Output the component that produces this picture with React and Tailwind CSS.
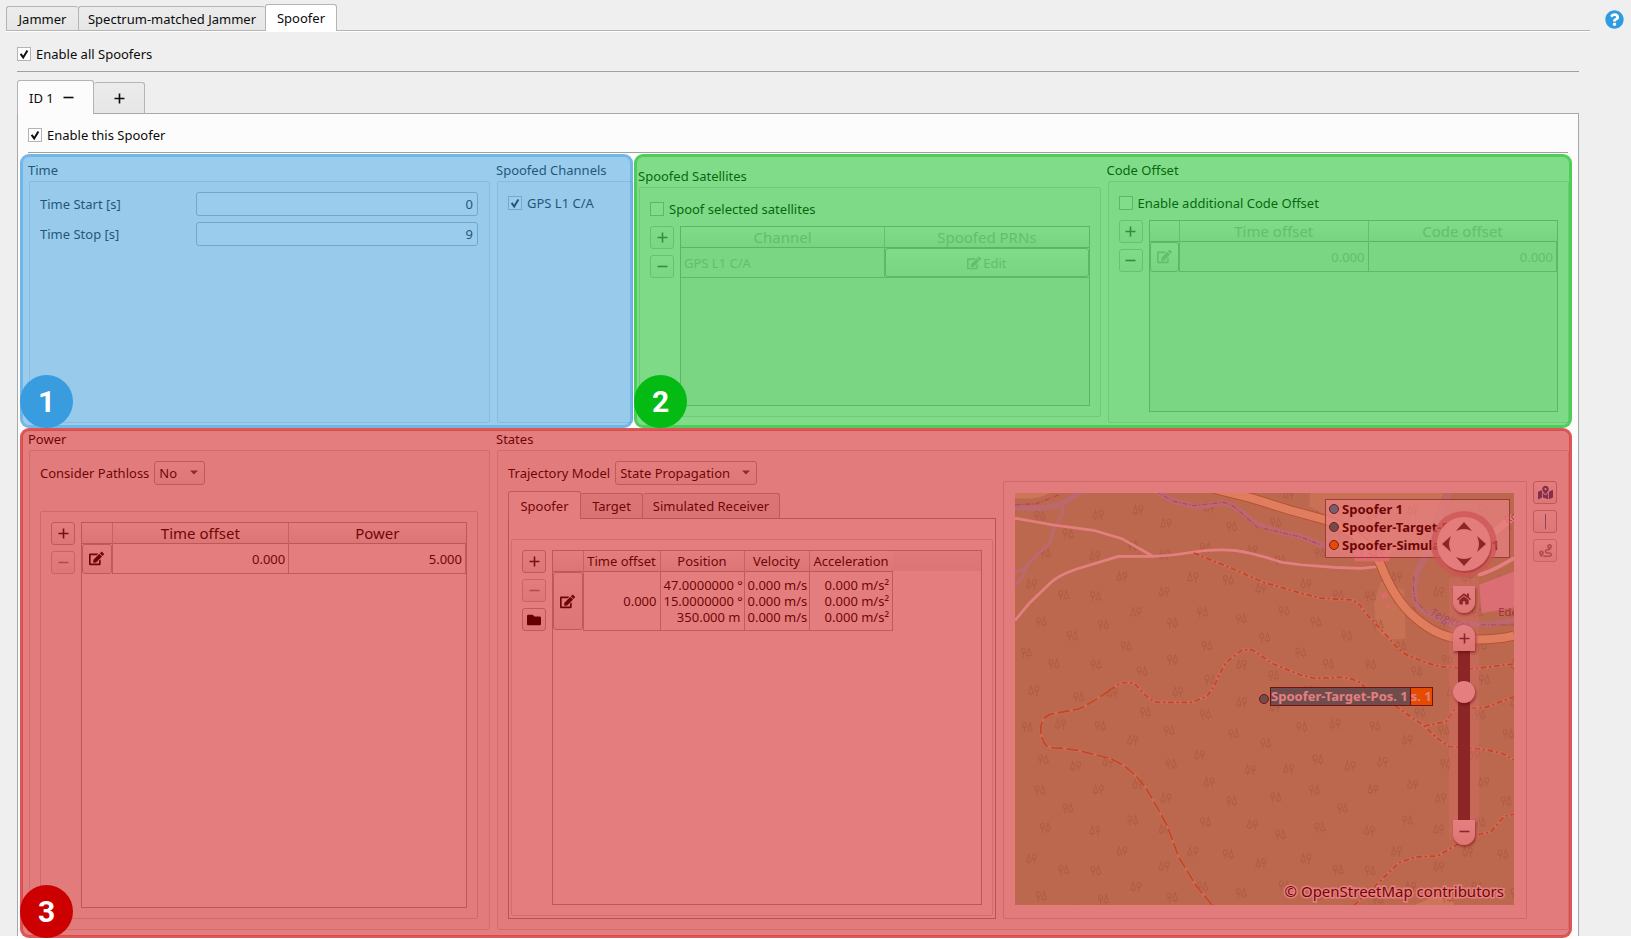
import React from 'react';
import { FaEdit, FaFolder, FaHome, FaMapMarkedAlt, FaQuestionCircle, FaRoute } from 'react-icons/fa';
import clsx from 'clsx';

const bevel = 'border border-[#b4b4b4] rounded-[3px] bg-linear-to-b from-[#fcfcfc] to-[#efefef]';

function Check({ id, label, defaultChecked }) {
  return (
    <div className="flex items-center gap-[5px] h-5">
      <span className="relative size-[14px] shrink-0">
        <input
          id={id}
          type="checkbox"
          defaultChecked={defaultChecked}
          className="peer block size-[14px] appearance-none border border-[#b4b4b4] bg-white"
        />
        <svg viewBox="0 0 14 14" className="absolute inset-0 hidden peer-checked:block pointer-events-none">
          <path d="M3.6 6.8 L6.2 10.4 L10.4 3.4" fill="none" stroke="#111" strokeWidth="2" />
        </svg>
      </span>
      <label htmlFor={id}>{label}</label>
    </div>
  );
}

function Group({ title, className, children }) {
  return (
    <section className={clsx('flex flex-col min-w-0', className)}>
      {title && <h3 className="h-5 leading-5">{title}</h3>}
      <div className="flex-1 flex flex-col ml-px mt-px border border-[#dadada] rounded-[2px] bg-[#f8f8f8] p-[10px]">
        {children}
      </div>
    </section>
  );
}

function Tool({ label, disabled, children }) {
  return (
    <button
      type="button"
      aria-label={label}
      disabled={disabled}
      className={clsx(bevel, 'w-6 h-[23px] flex items-center justify-center text-[#222] disabled:text-[#999] disabled:border-[#c8c8c8]')}
    >
      {children}
    </button>
  );
}

function Plus() {
  return (
    <svg width="11" height="11" viewBox="0 0 11 11" fill="none" stroke="currentColor" strokeWidth="1.6">
      <path d="M5.5 0.5 V10.5 M0.5 5.5 H10.5" />
    </svg>
  );
}

function Minus() {
  return (
    <svg width="11" height="11" viewBox="0 0 11 11" fill="none" stroke="currentColor" strokeWidth="1.6">
      <path d="M0.5 5.5 H10.5" />
    </svg>
  );
}

function Tools({ locked, muted, folder }) {
  return (
    <div className={clsx('flex flex-col gap-[6px]', muted && 'opacity-70')}>
      <Tool label="Add row"><Plus /></Tool>
      <Tool label="Remove row" disabled={locked}><Minus /></Tool>
      {folder && <Tool label="Open file"><FaFolder size={14} className="text-black" /></Tool>}
    </div>
  );
}

function EditCell({ disabled }) {
  return (
    <td className="w-[30px] h-[30px] p-0">
      <button
        type="button"
        aria-label="Edit row"
        disabled={disabled}
        className={clsx(bevel, 'size-full min-h-[29px] flex items-center justify-center')}
      >
        <FaEdit size={15} />
      </button>
    </td>
  );
}

const head = 'h-5 p-0 font-normal text-center bg-linear-to-b from-[#fcfcfc] to-[#ececec]';
const cell = 'border border-t-0 border-[#b8b8b8] px-[3px] py-0 text-right';

// Two value columns behind an edit button
function OffsetTable({ first, second, a, b, disabled }) {
  return (
    <div className={clsx('flex-1 border border-[#b0b0b0]', disabled ? 'bg-[#f0f0f0] text-[#c2c2c2]' : 'bg-[#fcfcfc]')}>
      <table className="w-full table-fixed border-collapse">
        <thead className="text-[15px] leading-5">
          <tr className="border-b border-[#b0b0b0]">
            <th className={clsx(head, 'w-[30px]')} aria-label="Edit" />
            <th className={clsx(head, 'border-x border-[#c4c4c4]')}>{first}</th>
            <th className={head}>{second}</th>
          </tr>
        </thead>
        <tbody>
          <tr>
            <EditCell disabled={disabled} />
            <td className={cell}>{a}</td>
            <td className={cell}>{b}</td>
          </tr>
        </tbody>
      </table>
    </div>
  );
}

function Dropdown({ id, label, options, className }) {
  return (
    <div className="flex items-center gap-[5px] h-6">
      <label htmlFor={id}>{label}</label>
      <span className="relative">
        <select id={id} className={clsx(bevel, 'block appearance-none h-6 px-1', className)}>
          {options.map((o) => <option key={o}>{o}</option>)}
        </select>
        <svg width="8" height="5" viewBox="0 0 8 5" className="absolute right-[7px] top-[9px] pointer-events-none">
          <path d="M0 0.5 H8 L4 4.5 Z" fill="#555" />
        </svg>
      </span>
    </div>
  );
}

function Badge({ children, className }) {
  return (
    <div className={clsx('absolute z-20 left-0 size-[53px] rounded-full flex items-center justify-center text-white font-bold text-[30px] leading-none font-[Roboto,sans-serif]', className)}>
      {children}
    </div>
  );
}

// Tree symbols as [x, y, mirrored], repeated every 822 units
const TREES = [
  [120, 139, 0], [294, 137, 1], [413, 122, 1], [497, 163, 1], [626, 115, 1], [694, 172, 0], [826, 160, 0],
  [864, 75, 1], [749, 78, 1], [204, 193, 0], [136, 251, 0], [284, 260, 1], [398, 229, 0], [491, 256, 1],
  [616, 235, 0], [755, 242, 1], [840, 272, 0], [94, 344, 1], [191, 377, 0], [287, 380, 0], [365, 322, 1],
  [577, 324, 1], [684, 331, 0], [781, 357, 1], [491, 367, 1], [407, 428, 1], [607, 428, 0], [723, 447, 0],
  [851, 424, 0], [124, 457, 0], [310, 466, 0], [517, 460, 0], [217, 499, 0], [378, 530, 0], [620, 528, 0],
  [793, 504, 0], [79, 549, 0], [162, 583, 0], [288, 585, 0], [426, 605, 0], [517, 570, 0], [723, 585, 1],
  [820, 618, 0], [101, 663, 1], [236, 682, 0], [336, 669, 1], [532, 667, 1], [629, 630, 0], [723, 698, 1],
  [82, 772, 0], [181, 763, 1], [301, 769, 0], [436, 728, 0], [616, 734, 0], [507, 782, 0], [397, 811, 1],
  [700, 792, 0], [796, 821, 0], [823, 712, 1], [130, 869, 0], [226, 889, 1], [323, 876, 1], [513, 882, 0],
  [597, 856, 1],
];

const TRACKS = [
  'M580 250 L680 290 L790 338 L900 370 L960 385 L1050 390 Q1075 395 1090 425 L1160 500 Q1200 550 1230 560 Q1290 585 1320 590 L1410 597 L1539 582',
  'M330 660 L350 645 Q380 632 403 642 L440 680 Q460 697 480 697 H575 L620 678 Q640 655 650 630 Q665 595 680 575 L725 540 H755 L820 583 L900 615 L940 625 L1020 622 Q1060 625 1080 640 L1120 680 L1180 705 L1230 740 L1270 768 L1310 805 L1345 830 L1400 832 L1460 840 L1505 850 L1539 870',
  'M1270 768 L1335 755 L1360 720 L1410 715 L1455 712 L1539 680',
  'M1060 1304 L1110 1260 L1195 1177 L1245 1160 L1310 1157 L1365 1125 L1435 1092 L1470 1085 L1510 1038 L1539 1032',
];

const LONG_TRACK = 'M330 660 Q270 702 235 717 L150 733 Q122 745 122 778 Q124 812 140 828 Q150 834 180 834 L230 840 L330 865 L370 885 L405 915 L435 950 L470 1010 L500 1065 L535 1160 L590 1250 L635 1304';

const RIVERS = [
  ['M45 112 Q130 125 190 100 L240 69', 16],
  ['M185 105 L188 130 L160 180 L148 222 L110 255 L75 295 L45 308 M75 295 L65 328 L45 345', 9],
  ['M465 64 L520 95 L590 112 L670 100 L700 110 L770 165 L830 185 L900 200 L960 225 L1010 235', 16],
  ['M1345 69 L1310 150 L1270 270 Q1235 310 1242 390 Q1250 415 1280 430 L1350 463 L1470 463 L1539 450', 16],
];

const ROAD = 'M630 55 L750 85 L870 122 L980 152 Q1090 195 1140 285 Q1180 390 1245 445 Q1310 500 1370 505 Q1460 515 1539 497';

function Terrain() {
  return (
    <svg
      viewBox="45 69 1494 1236"
      preserveAspectRatio="xMidYMid slice"
      className="absolute inset-0 size-full font-['Open_Sans',sans-serif]"
      aria-hidden="true"
    >
      <defs>
        <g id="tree" fill="none" stroke="#94b98a" strokeWidth="3">
          <ellipse cx="-9" cy="-6" rx="6" ry="8" />
          <path d="M-9 -4 V15 M8 -15 L15 8 H1 Z M8 8 V15" />
        </g>
        <g id="grove">
          {TREES.map(([x, y, m]) => (
            <use key={`${x}-${y}`} href="#tree" transform={`translate(${x} ${y})${m ? ' scale(-1 1)' : ''}`} />
          ))}
        </g>
      </defs>
      <rect x="45" y="69" width="1494" height="1236" fill="#add19e" />
      <g fill="#cdebb0">
        <path d="M45 69 H150 Q120 92 45 86 Z" />
        <path d="M930 69 H1330 L1260 230 L1130 250 L1000 150 L925 110 Z" opacity="0.7" />
        <path d="M1140 335 L1210 360 L1215 505 Q1150 520 1125 470 L1120 400 Z" opacity="0.6" />
        <path d="M1240 1304 L1310 1275 L1350 1285 L1362 1304 Z" />
      </g>
      {[0, 822].map((dx) => [0, 822].map((dy) => (
        <use key={`${dx}-${dy}`} href="#grove" x={dx} y={dy} />
      )))}
      {RIVERS.map(([d, w]) => (
        <path key={d} d={d} fill="none" stroke="#aad3df" strokeWidth={w} strokeLinejoin="round" />
      ))}
      <path
        d="M45 106 L110 102 L180 74 M465 64 L520 95 L580 108 L670 98 L700 110 L770 172 L900 202 L960 225"
        fill="none" stroke="#ac6ab0" strokeWidth="4" strokeDasharray="16 5 4 5" opacity="0.7"
      />
      <path d="M1240 320 Q1235 350 1242 390 L1280 430 M1440 465 H1539" fill="none" stroke="#8d80b0" strokeWidth="4" strokeDasharray="16 5 4 5" opacity="0.7" />
      <path d="M1435 345 L1539 305 V412 L1442 430 Z" fill="#ebdbe8" />
      <g fill="none" stroke="#ffffff" strokeLinejoin="round">
        <path d="M45 146 L160 166 L280 182 L365 207 L455 258" strokeWidth="8" />
        <path d="M45 452 L90 398 L155 336 Q180 315 230 298 L355 260 H460 Q520 258 580 247 Q640 238 700 242 Q760 250 845 278 L900 285 L1000 293 L1080 296 L1130 291" strokeWidth="8" />
        <path d="M1430 315 Q1460 312 1539 265" strokeWidth="11" />
        <path d="M1440 220 L1539 140" strokeWidth="20" />
      </g>
      <path d={ROAD} fill="none" stroke="#a0a45a" strokeWidth="30" />
      <path d={ROAD} fill="none" stroke="#f7fabf" strokeWidth="24" />
      <g fill="#f0d0d8">
        <path d="M1139 372 L1155 366 L1161 382 L1145 389 Z" />
        <circle cx="1163" cy="409" r="6" />
        <rect x="1062" y="235" width="104" height="40" rx="5" />
      </g>
      <text x="1114" y="266" textAnchor="middle" fontSize="32" fill="#a07c80">L343</text>
      <text transform="translate(1285 436) rotate(23)" fontSize="34" fontStyle="italic" fill="#7d8fd0">Teigitsch</text>
      <text x="1492" y="440" fontSize="34" fill="#8a4a90">Ede</text>
      <text transform="translate(1518 164) rotate(-30)" fontSize="32" fill="#707070">Ro</text>
      {TRACKS.map((d) => (
        <g key={d} fill="none" strokeLinejoin="round">
          <path d={d} stroke="#f4e0d0" strokeWidth="9" opacity="0.45" />
          <path d={d} stroke="#b48e48" strokeWidth="5" strokeDasharray="17 8 7 8" />
        </g>
      ))}
      <g fill="none" strokeLinejoin="round">
        <path d={LONG_TRACK} stroke="#f4e0d0" strokeWidth="8" opacity="0.45" />
        <path d={LONG_TRACK} stroke="#b48e48" strokeWidth="5" strokeDasharray="36 10" />
      </g>
    </svg>
  );
}

const knob = 'absolute right-[39px] w-[22px] flex justify-center bg-linear-to-b from-white to-[#f0eaea] text-[#4c4c4c] shadow-[1px_2px_3px_rgba(0,0,0,0.5)]';

function MapView() {
  return (
    <div className="relative flex-1 overflow-hidden">
      <Terrain />
      <ul className="absolute top-[6px] right-1 w-[185px] h-[59px] border border-[#555]/80 bg-white/75 pl-[3px] font-bold text-[13px]">
        {[
          ['Spoofer 1', '', 'bg-[#18c0e0]'],
          ['Spoofer-Target-P', '', 'bg-[#149898]'],
          ['Spoofer-Simula', '1', 'bg-[#ff9900]'],
        ].map(([name, no, dot]) => (
          <li key={name} className="flex items-center h-[18px] pr-[10px]">
            <span className={clsx('size-[10px] mr-[3px] rounded-full border border-[#333]', dot)} />
            {name}
            <span className="ml-auto">{no}</span>
          </li>
        ))}
      </ul>

      <div className="absolute right-[35px] top-[85px] w-[30px] h-[262px] bg-[#f0d8e0]/30" />
      <svg viewBox="0 0 66 66" className="absolute right-[17px] top-[18px] size-[66px]" role="img" aria-label="Pan">
        <circle cx="33" cy="33" r="33" fill="#d0a8a8" opacity="0.75" />
        <circle cx="34" cy="35" r="27" fill="#5a5a5a" opacity="0.45" />
        <circle cx="33" cy="33" r="27" fill="#fcf8f8" />
        <g fill="#4c4c4c">
          <path d="M33 11 L41 20 Q33 16 25 20 Z" />
          <path d="M33 55 L41 46 Q33 50 25 46 Z" />
          <path d="M11 33 L20 25 Q16 33 20 41 Z" />
          <path d="M55 33 L46 25 Q50 33 46 41 Z" />
        </g>
      </svg>
      <button type="button" aria-label="Home" className={clsx(knob, 'top-[93px] h-[27px] pt-[6px] rounded-b-full')}>
        <FaHome size={14} />
      </button>
      <input
        type="range"
        aria-label="Zoom"
        defaultValue="80"
        className="absolute right-[39px] top-[158px] w-[22px] h-[170px] appearance-none bg-transparent [writing-mode:vertical-lr] [direction:rtl] [&::-webkit-slider-runnable-track]:w-3 [&::-webkit-slider-runnable-track]:bg-[#4c4c4c] [&::-webkit-slider-thumb]:appearance-none [&::-webkit-slider-thumb]:size-[22px] [&::-webkit-slider-thumb]:-ml-[5px] [&::-webkit-slider-thumb]:rounded-full [&::-webkit-slider-thumb]:bg-white [&::-webkit-slider-thumb]:shadow-[1px_2px_3px_rgba(0,0,0,0.5)]"
      />
      <button type="button" aria-label="Zoom in" className={clsx(knob, 'top-[132px] h-[26px] pt-[8px] rounded-t-full')}>
        <Plus />
      </button>
      <button type="button" aria-label="Zoom out" className={clsx(knob, 'top-[327px] h-[25px] pt-[6px] rounded-b-full')}>
        <Minus />
      </button>

      <span className="absolute left-[244px] top-[201px] size-[10px] rounded-full bg-[#149898] border border-[#222]" />
      <div className="absolute left-[255px] top-[194px] flex h-[19px] font-bold text-[13px] leading-[17px] text-white">
        <span className="border border-[#222] bg-[#149898] pr-[2px] whitespace-nowrap">Spoofer-Target-Pos. 1</span>
        <span className="border border-l-0 border-[#222] bg-[#ff9900] whitespace-nowrap">s. 1</span>
      </div>
      <p className="absolute right-[10px] bottom-1 text-[15px] leading-5 [-webkit-text-stroke:3px_#fff] [paint-order:stroke_fill]">
        © OpenStreetMap contributors
      </p>
    </div>
  );
}

const tab = 'border border-b-0 border-[#b4b4b4] rounded-t-[3px]';
const idle = 'bg-linear-to-b from-[#ececec] to-[#e6e6e6]';

export default function App() {
  return (
    <div className="min-h-screen flex flex-col bg-white pb-[3px] text-[13px] leading-5 text-[#0c0c0c] font-['Noto_Sans','Open_Sans',sans-serif]">
      <div className="flex-1 flex bg-[#efefef]">
        <main className="flex-1 flex flex-col min-w-0 pt-1">
          <div role="tablist" className="flex items-end ml-[6px] border-b border-[#b4b4b4] shadow-[0_1px_0_#fff]">
            <button type="button" role="tab" className={clsx(tab, idle, 'h-[24px] w-[72px] border-r-0')}>Jammer</button>
            <button type="button" role="tab" className={clsx(tab, idle, 'h-[24px] w-[187px] border-r-0')}>Spectrum-matched Jammer</button>
            <button type="button" role="tab" aria-selected="true" className={clsx(tab, 'h-[27px] w-[72px] -mb-px bg-white')}>Spoofer</button>
          </div>

          <div className="flex-1 flex flex-col pl-[17px] pr-[11px]">
            <div className="mt-[13px] pb-[7px] border-b border-[#a0a0a0]">
              <Check id="all" label="Enable all Spoofers" defaultChecked />
            </div>

            <div role="tablist" className="flex items-end mt-2">
              <button type="button" role="tab" aria-selected="true" className={clsx(tab, 'relative z-10 h-[34px] w-[77px] -mb-px bg-[#fcfcfc] flex items-center gap-[9px] pl-[11px]')}>
                ID 1 <Minus />
              </button>
              <button type="button" role="tab" aria-label="Add spoofer" className={clsx(tab, idle, 'h-[31px] w-[51px] border-l-0 flex items-center justify-center')}>
                <Plus />
              </button>
            </div>

            <div className="flex-1 flex flex-col bg-[#fcfcfc] border border-b-0 border-[#a8a8a8]">
              <div className="mx-[10px] pt-[11px] pb-[7px] border-b border-[#a0a0a0]">
                <Check id="this" label="Enable this Spoofer" defaultChecked />
              </div>

              <div className="mt-px grid grid-cols-[613fr_938fr] gap-px pl-[2px] pr-[6px]">
                <div className="relative min-h-[274px] pt-[6px] pb-[5px] pl-2 grid grid-cols-[462fr_137fr] gap-[6px]">
                  <Group title="Time">
                    <div className="grid grid-cols-[156px_1fr] gap-y-[6px] pr-px">
                      <label htmlFor="start" className="leading-6">Time Start [s]</label>
                      <input id="start" defaultValue="0" className="h-6 min-w-0 px-1 text-right border border-[#b0b0b0] rounded-[3px] bg-[#fcfcfc]" />
                      <label htmlFor="stop" className="leading-6">Time Stop [s]</label>
                      <input id="stop" defaultValue="9" className="h-6 min-w-0 px-1 text-right border border-[#b0b0b0] rounded-[3px] bg-[#fcfcfc]" />
                    </div>
                  </Group>
                  <Group title="Spoofed Channels">
                    <div className="pt-px">
                      <Check id="l1" label="GPS L1 C/A" defaultChecked />
                    </div>
                  </Group>
                  <div className="absolute inset-0 rounded-[9px] bg-[#389cde]/50 border-2 border-[#389cde]/40 shadow-[inset_0_0_0_1px_rgba(56,156,222,0.4)] pointer-events-none" />
                  <Badge className="bottom-0 bg-[#389cde]">1</Badge>
                </div>

                <div className="relative pt-[6px] pb-[5px] pl-1 pr-[3px] grid grid-cols-2 gap-[6px]">
                  <Group title="Spoofed Satellites" className="py-[6px]">
                    <div className="pt-px">
                      <Check id="sel" label="Spoof selected satellites" />
                    </div>
                    <div className="flex-1 flex gap-[6px] mt-[7px]">
                      <Tools muted />
                      <div className="flex-1 border border-[#b0b0b0] bg-[#f0f0f0] text-[#c2c2c2]">
                        <table className="w-full table-fixed border-collapse">
                          <thead className="text-[15px] leading-5">
                            <tr className="border-b border-[#b0b0b0]">
                              <th className={clsx(head, 'border-r border-[#c4c4c4]')}>Channel</th>
                              <th className={head}>Spoofed PRNs</th>
                            </tr>
                          </thead>
                          <tbody>
                            <tr className="border-b border-[#b8b8b8]">
                              <td className="h-[30px] px-[3px] border-r border-[#b8b8b8]">GPS L1 C/A</td>
                              <td className="p-0">
                                <button type="button" disabled className={clsx(bevel, 'w-full h-[29px] flex items-center justify-center gap-[2px]')}>
                                  <FaEdit size={14} /> Edit
                                </button>
                              </td>
                            </tr>
                          </tbody>
                        </table>
                      </div>
                    </div>
                  </Group>
                  <Group title="Code Offset">
                    <div className="pt-px">
                      <Check id="code" label="Enable additional Code Offset" />
                    </div>
                    <div className="flex-1 flex gap-[6px] mt-[7px]">
                      <Tools muted />
                      <OffsetTable first="Time offset" second="Code offset" a="0.000" b="0.000" disabled />
                    </div>
                  </Group>
                  <div className="absolute inset-0 rounded-[9px] bg-[#04bb14]/50 border-2 border-[#04bb14]/40 shadow-[inset_0_0_0_1px_rgba(4,187,20,0.4)] pointer-events-none" />
                  <Badge className="bottom-0 bg-[#04bb14]">2</Badge>
                </div>
              </div>

              <div className="relative flex-1 ml-[2px] mr-[6px] pt-px pb-[6px] pl-2 pr-[3px] grid grid-cols-[462fr_1073fr] gap-[6px]">
                <Group title="Power">
                  <Dropdown id="loss" label="Consider Pathloss" options={['No', 'Yes']} className="w-[51px]" />
                  <div className="flex-1 flex gap-[6px] mt-[26px] mr-px p-[10px] border border-[#d4d4d4] rounded-[2px]">
                    <Tools locked />
                    <OffsetTable first="Time offset" second="Power" a="0.000" b="5.000" />
                  </div>
                </Group>

                <Group title="States">
                  <div className="flex-1 flex">
                    <div className="w-[488px] flex flex-col">
                      <Dropdown id="model" label="Trajectory Model" options={['State Propagation']} className="w-[142px]" />
                      <div role="tablist" className="flex items-end mt-[6px]">
                        <button type="button" role="tab" aria-selected="true" className={clsx(tab, 'relative z-10 h-[28px] w-[73px] -mb-px bg-[#fcfcfc]')}>Spoofer</button>
                        <button type="button" role="tab" className={clsx(tab, idle, 'h-[25px] w-[62px] border-l-0')}>Target</button>
                        <button type="button" role="tab" className={clsx(tab, idle, 'h-[25px] w-[137px] border-l-0')}>Simulated Receiver</button>
                      </div>
                      <div className="flex-1 flex border border-[#a8a8a8] bg-[#fcfcfc] px-[2px] pt-[20px] pb-[2px]">
                        <div className="flex-1 flex gap-[6px] p-[10px] border border-[#dadada] rounded-[2px]">
                          <Tools locked folder />
                          <div className="flex-1 border border-[#b0b0b0]">
                            <div className="bg-linear-to-b from-[#f4f4f4] from-0% to-[#ececec] to-[20px] bg-[length:100%_20px] bg-no-repeat">
                              <table className="table-fixed border-collapse w-[340px]">
                                <thead>
                                  <tr className="border-b border-[#b0b0b0]">
                                    <th className={clsx(head, 'w-[30px]')} aria-label="Edit" />
                                    <th className={clsx(head, 'w-[77px] border-x border-[#c4c4c4]')}>Time offset</th>
                                    <th className={clsx(head, 'w-[84px] border-r border-[#c4c4c4]')}>Position</th>
                                    <th className={clsx(head, 'w-[65px] border-r border-[#c4c4c4]')}>Velocity</th>
                                    <th className={head}>Acceleration</th>
                                  </tr>
                                </thead>
                                <tbody>
                                  <tr className="leading-4 whitespace-nowrap">
                                    <td className="p-0">
                                      <button type="button" aria-label="Edit state" className={clsx(bevel, 'w-full h-[58px] flex items-center justify-center')}>
                                        <FaEdit size={15} />
                                      </button>
                                    </td>
                                    <td className={cell}>0.000</td>
                                    <td className={cell}>47.0000000 °<br />15.0000000 °<br />350.000 m</td>
                                    <td className={cell}>0.000 m/s<br />0.000 m/s<br />0.000 m/s</td>
                                    <td className={cell}>0.000 m/s²<br />0.000 m/s²<br />0.000 m/s²</td>
                                  </tr>
                                </tbody>
                              </table>
                            </div>
                          </div>
                        </div>
                      </div>
                    </div>

                    <div className="flex-1 flex mt-5 ml-[7px] pt-[11px] pb-[13px] pl-[11px] pr-3 border border-[#d4d4d4] rounded-[2px]">
                      <MapView />
                    </div>
                    <div className="flex flex-col gap-[6px] mt-5 ml-[6px] mr-px">
                      <Tool label="Show map"><FaMapMarkedAlt size={15} className="text-[#3b5f98]" /></Tool>
                      <Tool label="Show line"><span className="w-px h-[15px] bg-[#5c84b0]" /></Tool>
                      <Tool label="Show route" disabled><FaRoute size={13} /></Tool>
                    </div>
                  </div>
                </Group>
                <div className="absolute z-20 inset-x-0 top-0 -bottom-[2px] rounded-[9px] bg-[#cc0000]/50 border-2 border-[#cc0000]/30 shadow-[inset_0_0_0_1px_rgba(204,0,0,0.4)] pointer-events-none" />
                <Badge className="-bottom-[2px] bg-[#cc0000]">3</Badge>
              </div>
            </div>
          </div>
        </main>
        <aside className="w-[41px] flex justify-center pt-[10px] pl-[7px]">
          <a href="#help" aria-label="Help" className="size-[19px] rounded-full bg-white text-[#2f9be0]">
            <FaQuestionCircle size={19} />
          </a>
        </aside>
      </div>
    </div>
  );
}
